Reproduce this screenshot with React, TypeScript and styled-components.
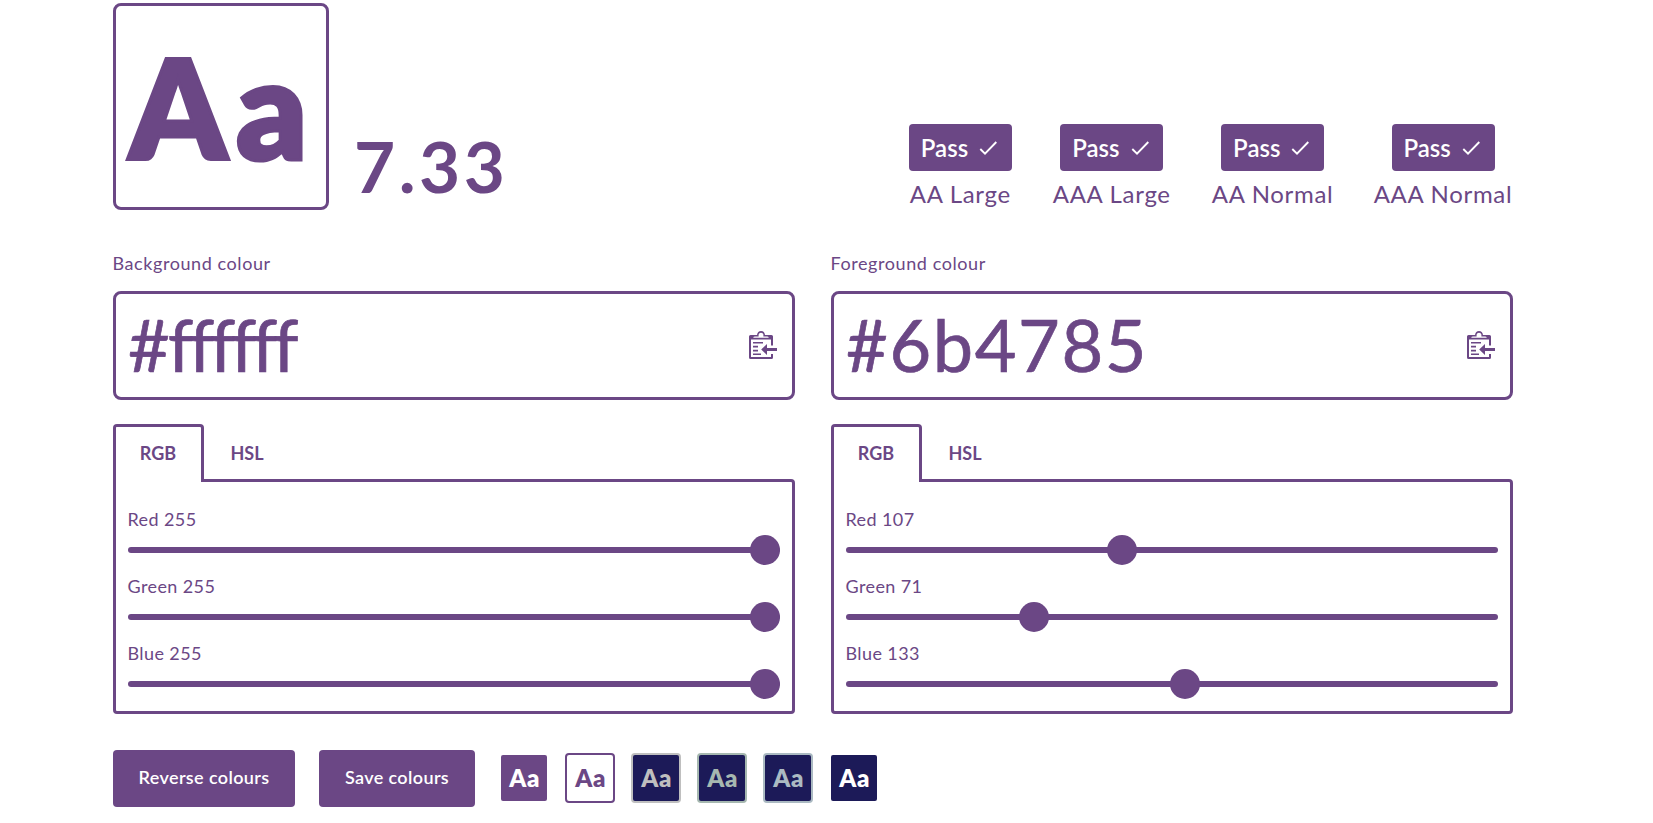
import React, { useState } from "react";
import styled, { createGlobalStyle } from "styled-components";

const purple = "#6b4785";
const navy = "#1c1a58";

const GlobalStyle = createGlobalStyle`
  *, *::before, *::after { box-sizing: border-box; }
  body {
    margin: 0;
    background: #fff;
    color: ${purple};
    font-family: Lato, "Open Sans", sans-serif;
    font-size: 18px;
    line-height: 26px;
  }
`;

const Page = styled.main`
  width: 1400px;
  margin-left: 113px;
  padding-top: 3px;
`;

const Header = styled.header`
  display: flex;
  align-items: flex-end;
  height: 207px;
  margin-bottom: 40px;
`;

const Preview = styled.div`
  width: 216px;
  height: 207px;
  padding-left: 13px;
  border: 3px solid ${purple};
  border-radius: 8px;
  font-size: 138px;
  font-weight: 800;
  line-height: 201px;
  letter-spacing: 9px;
  white-space: nowrap;
  -webkit-text-stroke: 3px ${purple};
`;

const Ratio = styled.div`
  margin-left: 25px;
  font-size: 71px;
  font-weight: 700;
  line-height: 89px;
  letter-spacing: 3.5px;
`;

const Results = styled.div`
  display: grid;
  grid-template-columns: 103px 121px 122px 140px;
  column-gap: 39.4px;
  margin-left: auto;
`;

const Result = styled.div`
  display: flex;
  flex-direction: column;
  align-items: center;
  gap: 7px;
`;

const Badge = styled.div`
  display: flex;
  align-items: center;
  gap: 11px;
  width: 103px;
  height: 47px;
  padding-left: 12px;
  border-radius: 4px;
  background: ${purple};
  color: #fff;
  font-size: 24px;
  font-weight: 600;
  line-height: 45px;
`;

const ResultLabel = styled.div`
  font-size: 24px;
  line-height: 32px;
  letter-spacing: 0.7px;
  white-space: nowrap;
`;

const Columns = styled.div`
  display: grid;
  grid-template-columns: 1fr 1fr;
  column-gap: 36px;
`;

const FieldLabel = styled.div`
  margin-bottom: 15px;
  text-indent: -0.5px;
  letter-spacing: 0.58px;
`;

const HexField = styled.div`
  display: flex;
  align-items: center;
  justify-content: space-between;
  height: 109px;
  padding: 0 15px 0 12px;
  border: 3px solid ${purple};
  border-radius: 8px;
`;

const HexValue = styled.div<{ $tight?: boolean }>`
  font-size: 72px;
  line-height: 98px;
  margin-bottom: 4px;
  letter-spacing: ${(p) => (p.$tight ? "-4.2px" : "1.6px")};
  -webkit-text-stroke: 0.7px ${purple};
`;

const Hash = styled.span`
  letter-spacing: -1.8px;
`;

const Tabs = styled.div`
  display: flex;
  height: 58px;
  margin-top: 24px;
`;

const Tab = styled.button<{ $active?: boolean }>`
  position: relative;
  z-index: ${(p) => (p.$active ? 1 : 0)};
  width: ${(p) => (p.$active ? 91 : 86)}px;
  height: 58px;
  padding: ${(p) => (p.$active ? "0 1px 4px 0" : "0 0 4px")};
  border: 3px solid ${(p) => (p.$active ? purple : "transparent")};
  border-bottom: 0;
  border-radius: 4px 4px 0 0;
  background: ${(p) => (p.$active ? "#fff" : "transparent")};
  color: ${purple};
  font: 700 18px/50px Lato, sans-serif;
`;

const Panel = styled.div`
  display: flex;
  flex-direction: column;
  gap: 8px;
  height: 235px;
  margin-top: -3px;
  padding: 24px 12px 12px;
  border: 3px solid ${purple};
  border-radius: 0 4px 4px 4px;
`;

const SliderRow = styled.label`
  display: flex;
  flex-direction: column;
  gap: 3px;
  text-indent: -0.5px;
  letter-spacing: 0.4px;
`;

const Range = styled.input`
  appearance: none;
  width: 100%;
  height: 30px;
  margin: 0;
  background: transparent;

  &::-webkit-slider-runnable-track {
    height: 6px;
    border-radius: 3px;
    background: ${purple};
  }

  &::-webkit-slider-thumb {
    appearance: none;
    width: 30px;
    height: 30px;
    margin-top: -12px;
    border-radius: 50%;
    background: ${purple};
  }
`;

const Footer = styled.footer`
  display: flex;
  align-items: center;
  margin-top: 36px;
  gap: 24px;
`;

const Action = styled.button<{ $width: number }>`
  width: ${(p) => p.$width}px;
  height: 57px;
  padding: 0 0 3px;
  border: 0;
  border-radius: 4px;
  background: ${purple};
  color: #fff;
  font: 600 18px/26px Lato, sans-serif;
  letter-spacing: 0.38px;
  white-space: nowrap;
`;

const Swatches = styled.div`
  display: flex;
  gap: 16px;
  margin-bottom: 1px;
`;

const Swatch = styled.button<{ $bg: string; $fg: string }>`
  width: 50px;
  height: 50px;
  padding: 0;
  border: 2px solid ${(p) => p.$fg};
  border-radius: 4px;
  background: ${(p) => p.$bg};
  color: ${(p) => p.$fg};
  font: 800 24px/46px Lato, sans-serif;
  text-indent: 1.5px;
  letter-spacing: 0.8px;
`;

const CheckIcon = () => (
  <svg width="19" height="16" viewBox="0 0 19 16" fill="none">
    <path d="M1.3 9 L6 13.6 L17.3 2" stroke="#fff" strokeWidth="1.9" />
  </svg>
);

const PasteSvg = styled.svg`
  margin-bottom: 1px;
`;

const PasteIcon = () => (
  <PasteSvg width="28" height="28" viewBox="0 0 28 28" fill={purple}>
    <path
      fillRule="evenodd"
      d="M0 5.5 Q0 4 1.5 4 H8 Q8.6 0 12 0 Q15.4 0 16 4 H22.5 Q24 4 24 5.5 V14.6 H22 V8.4 H2 V26 H22 V23 H24 V26.5 Q24 28 22.5 28 H1.5 Q0 28 0 26.5 Z M4.2 6.8 H19.8 Q19.5 5.5 18 5.5 H14.4 V3.6 Q14 1.8 12 1.8 Q10 1.8 9.6 3.6 V5.5 H6 Q4.5 5.5 4.2 6.8 Z"
    />
    <path d="M4 11 H14 V12.6 H4 Z M4 14.8 H9 V16.6 H4 Z M4 18.8 H9 V20.6 H4 Z M4 22.4 H12 V24 H4 Z" />
    <path d="M12.2 18.5 L18 13 V17 H28 V20 H18 V24 Z" />
  </PasteSvg>
);

interface ColourProps {
  title: string;
  hex: string;
  tight?: boolean;
  rgb: [number, number, number];
}

const ColourPicker = ({ title, hex, tight, rgb }: ColourProps) => {
  const [values, setValues] = useState(rgb);
  const names = ["Red", "Green", "Blue"];
  return (
    <section>
      <FieldLabel>{title}</FieldLabel>
      <HexField>
        <HexValue $tight={tight}>
          {tight ? <Hash>#</Hash> : "#"}
          {hex}
        </HexValue>
        <PasteIcon />
      </HexField>
      <Tabs>
        <Tab $active>RGB</Tab>
        <Tab>HSL</Tab>
      </Tabs>
      <Panel>
        {names.map((name, i) => (
          <SliderRow key={name}>
            {`${name} ${values[i]}`}
            <Range
              type="range"
              min={0}
              max={255}
              value={values[i]}
              onChange={(e) =>
                setValues(values.map((v, j) => (j === i ? Number(e.target.value) : v)) as [number, number, number])
              }
            />
          </SliderRow>
        ))}
      </Panel>
    </section>
  );
};

const levels = ["AA Large", "AAA Large", "AA Normal", "AAA Normal"];

const saved = [
  { bg: purple, fg: "#ffffff" },
  { bg: "#ffffff", fg: purple },
  { bg: navy, fg: "#bfbfbf" },
  { bg: navy, fg: "#a6b8b0" },
  { bg: navy, fg: "#abbac2" },
  { bg: navy, fg: "#ffffff" },
];

export default function App() {
  return (
    <>
      <GlobalStyle />
      <Page>
        <Header>
          <Preview>Aa</Preview>
          <Ratio>7.33</Ratio>
          <Results>
            {levels.map((level) => (
              <Result key={level}>
                <Badge>
                  Pass
                  <CheckIcon />
                </Badge>
                <ResultLabel>{level}</ResultLabel>
              </Result>
            ))}
          </Results>
        </Header>
        <Columns>
          <ColourPicker title="Background colour" hex="ffffff" tight rgb={[255, 255, 255]} />
          <ColourPicker title="Foreground colour" hex="6b4785" rgb={[107, 71, 133]} />
        </Columns>
        <Footer>
          <Action $width={182}>Reverse colours</Action>
          <Action $width={156}>Save colours</Action>
          <Swatches>
            {saved.map((s, i) => (
              <Swatch key={i} $bg={s.bg} $fg={s.fg}>
                Aa
              </Swatch>
            ))}
          </Swatches>
        </Footer>
      </Page>
    </>
  );
}
